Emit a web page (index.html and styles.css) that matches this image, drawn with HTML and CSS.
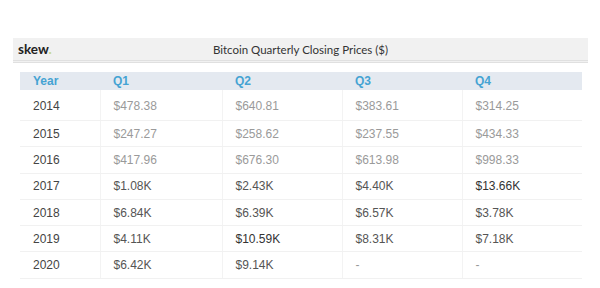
FILE: index.html
```html
<!DOCTYPE html>
<html lang="en">
<head>
  <meta charset="UTF-8">
  <title>Bitcoin Quarterly Closing Prices</title>
  <link rel="stylesheet" href="styles.css">
</head>
<body>
  <div class="panel">
    <div class="bar">
      <div class="logo">skew<span class="dot">.</span></div>
      <div class="title">Bitcoin Quarterly Closing Prices ($)</div>
      <div></div>
    </div>
    <table class="prices">
      <colgroup>
        <col class="c-year">
        <col class="c-q1">
        <col class="c-q">
        <col class="c-q">
        <col class="c-q">
      </colgroup>
      <thead>
        <tr><th>Year</th><th>Q1</th><th>Q2</th><th>Q3</th><th>Q4</th></tr>
      </thead>
      <tbody>
        <tr class="old first"><td>2014</td><td>$478.38</td><td>$640.81</td><td>$383.61</td><td>$314.25</td></tr>
        <tr class="old"><td>2015</td><td>$247.27</td><td>$258.62</td><td>$237.55</td><td>$434.33</td></tr>
        <tr class="old"><td>2016</td><td>$417.96</td><td>$676.30</td><td>$613.98</td><td>$998.33</td></tr>
        <tr><td>2017</td><td>$1.08K</td><td>$2.43K</td><td>$4.40K</td><td class="hi">$13.66K</td></tr>
        <tr><td>2018</td><td>$6.84K</td><td>$6.39K</td><td>$6.57K</td><td>$3.78K</td></tr>
        <tr><td>2019</td><td>$4.11K</td><td class="hi">$10.59K</td><td>$8.31K</td><td>$7.18K</td></tr>
        <tr><td>2020</td><td>$6.42K</td><td>$9.14K</td><td class="dash">-</td><td class="dash">-</td></tr>
      </tbody>
    </table>
  </div>
</body>
</html>
```

FILE: styles.css
```css
body {
  margin: 0;
  background: #fff;
  font-family: "Liberation Sans", Arial, sans-serif;
}

.panel {
  width: 575px;
  margin: 38px 0 0 13px;
}

.bar {
  display: grid;
  grid-template-columns: 1fr auto 1fr;
  align-items: center;
  height: 22px;
  background: #f1f1f1;
  border-bottom: 3px double #e0e0e0;
}

.logo {
  padding-left: 5px;
  font-family: Lato, sans-serif;
  font-weight: 700;
  font-size: 13.5px;
  color: #222;
}

.logo .dot {
  color: #c9d88a;
}

.title {
  font-family: Lato, sans-serif;
  font-size: 11.5px;
  color: #333;
}

.prices {
  margin: 9px 0 0 7px;
  border-collapse: collapse;
  table-layout: fixed;
  width: 562px;
  font-size: 12px;
}

.c-year { width: 80px; }
.c-q1 { width: 122px; }
.c-q { width: 120px; }

.prices th {
  height: 18px;
  padding: 0 13px;
  background: #e4e9f0;
  color: #45a3d3;
  font-weight: 700;
  text-align: left;
}

.prices td {
  height: 25.3px;
  padding: 0 13px;
  color: #555;
  border-bottom: 1px solid #f1f1f1;
  border-left: 1px solid #f3f3f3;
}

.prices tr.first td {
  height: 28px;
  padding-top: 2px;
}

.prices td:first-child {
  border-left: none;
  color: #444;
}

.prices tr.old td {
  color: #9a9a9a;
}

.prices tr.old td:first-child {
  color: #444;
}

.prices td.hi {
  color: #333;
}

.prices td.dash {
  color: #999;
}
```
